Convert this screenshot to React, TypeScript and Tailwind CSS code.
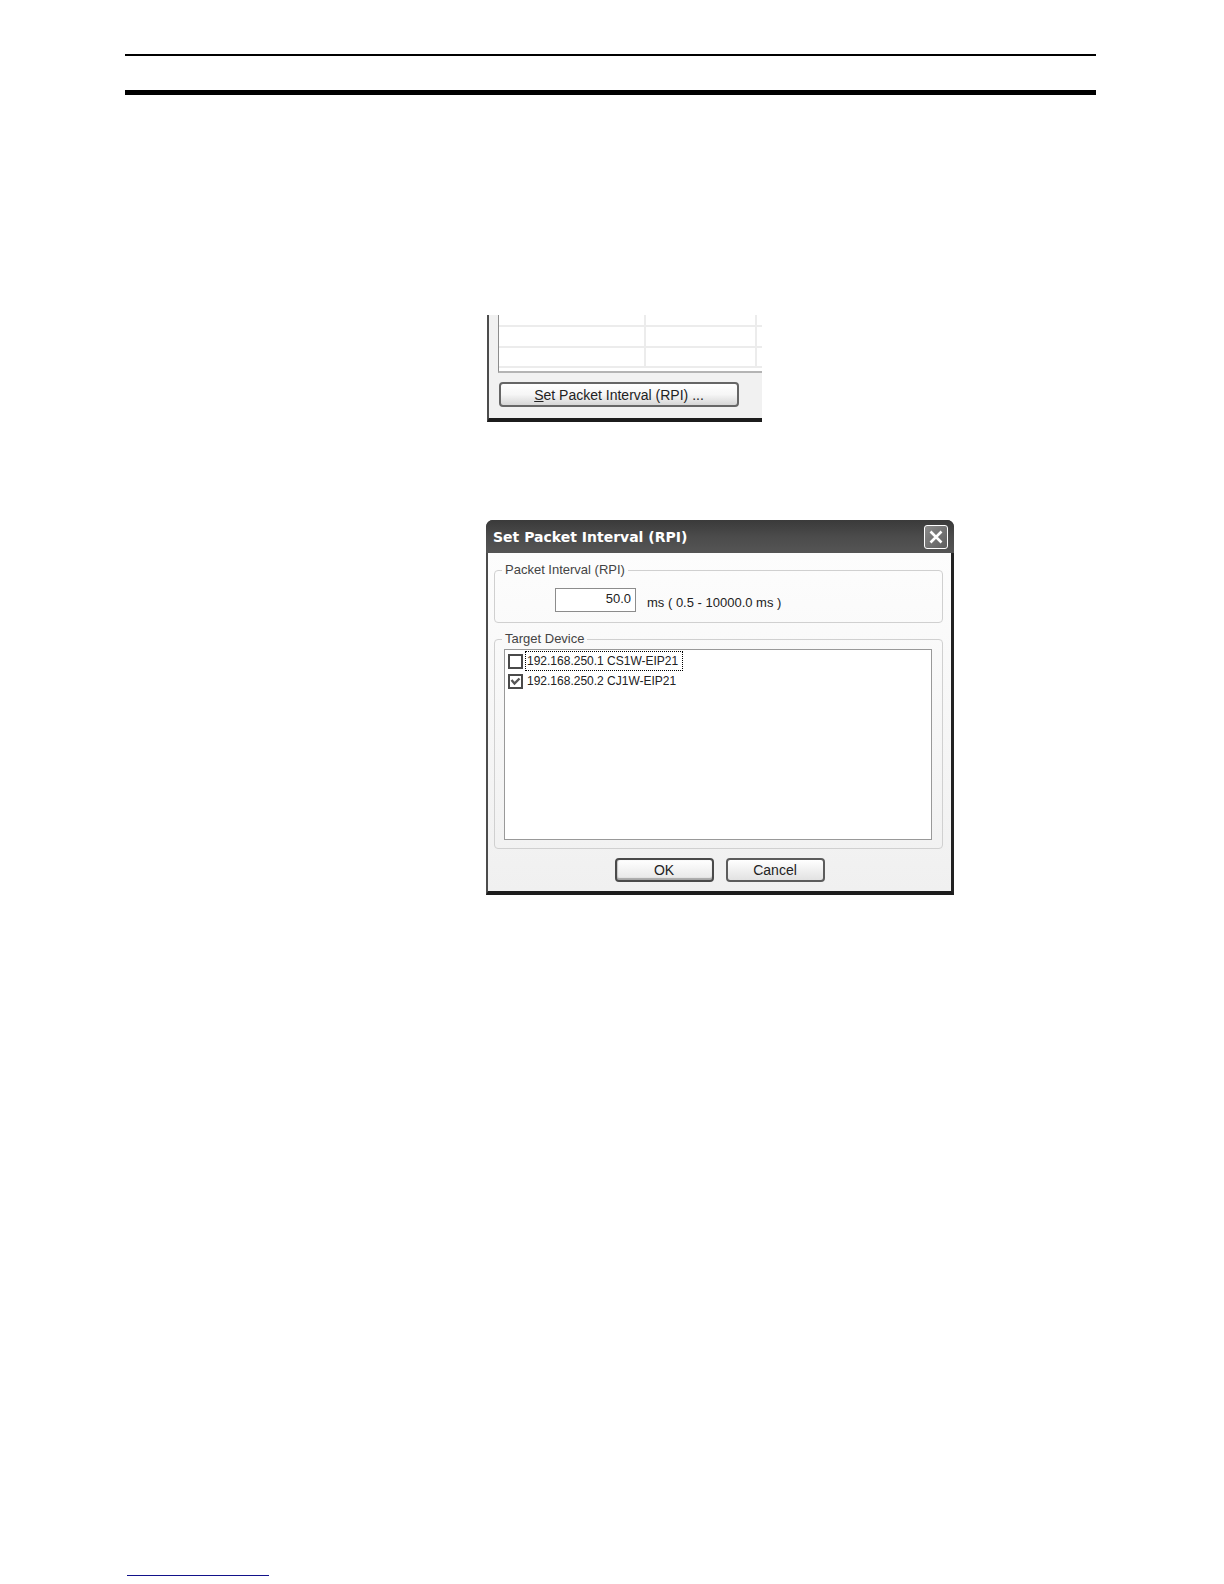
import React, { useState } from 'react';

type Device = {
  id: string;
  label: string;
  checked: boolean;
};

const initialDevices: Device[] = [
  { id: 'cs1w', label: '192.168.250.1 CS1W-EIP21', checked: false },
  { id: 'cj1w', label: '192.168.250.2 CJ1W-EIP21', checked: true },
];

// Two rules that run across the top of every manual page
const PageHeader = () => (
  <header className="flex flex-col gap-[34px] pt-[54px]">
    <div className="h-[2px] bg-black" />
    <div className="h-[5px] bg-black" />
  </header>
);

// Lower left corner of the connection window
const ConnectionTableCorner = () => (
  <section className="ml-px w-[275px] border-b-4 border-l-2 border-b-[#1c1c1c] border-l-[#4c4c4c] bg-[#f1f1f1]">
    <div className="pl-[9px]">
      <div className="border-b-2 border-l border-b-[#b4b4b4] border-l-[#8c8c8c] bg-white pb-[3px]">
        <table className="w-full table-fixed border-separate border-spacing-0">
          <colgroup>
            <col className="w-[147px]" />
            <col className="w-[111px]" />
            <col />
          </colgroup>
          <tbody>
            {['h-3', 'h-[21px]', 'h-5'].map((height, index) => (
              <tr key={index} className={height}>
                <td className="border-r-2 border-b-2 border-[#ececec] p-0" />
                <td className="border-r-2 border-b-2 border-[#ececec] p-0" />
                <td className="border-b-2 border-[#ececec] p-0" />
              </tr>
            ))}
          </tbody>
        </table>
      </div>
    </div>
    <div className="flex pt-[9px] pb-[11px] pl-[10px]">
      <button
        type="button"
        className="h-[25px] w-[240px] rounded-[4px] border-2 border-[#666] bg-linear-to-b from-white via-[#f6f6f6] to-[#d6d6d6] text-sm leading-4 text-[#222]"
      >
        <span className="underline">S</span>et Packet Interval (RPI) ...
      </button>
    </div>
  </section>
);

const CloseButton = () => (
  <button
    type="button"
    aria-label="Close"
    className="flex h-6 w-6 items-center justify-center rounded-[3px] border border-white bg-linear-to-br from-[#8c8c8c] to-[#5e5e5e]"
  >
    <svg width="14" height="14" viewBox="0 0 14 14" fill="none">
      <path d="M1.5 1.5L12.5 12.5M12.5 1.5L1.5 12.5" stroke="white" strokeWidth="2.6" />
    </svg>
  </button>
);

const DeviceRow = ({
  device,
  focused,
  onToggle,
}: {
  device: Device;
  focused: boolean;
  onToggle: () => void;
}) => (
  <div className="flex h-5 items-center gap-[2px]">
    <span className="relative flex h-[15px] w-[15px]">
      <input
        id={device.id}
        type="checkbox"
        checked={device.checked}
        onChange={onToggle}
        className="h-[15px] w-[15px] appearance-none border-2 border-[#4a4a4a] bg-white"
      />
      {device.checked && (
        <svg
          viewBox="0 0 15 15"
          fill="none"
          className="pointer-events-none absolute inset-0 h-[15px] w-[15px]"
        >
          <path d="M3.5 6L6.5 9.5L11.5 4.5" stroke="#555" strokeWidth="2.4" />
        </svg>
      )}
    </span>
    <label
      htmlFor={device.id}
      className={`flex h-5 items-center border border-dotted pr-1 pl-px text-xs leading-4 ${
        focused ? 'border-black' : 'border-transparent'
      }`}
    >
      {device.label}
    </label>
  </div>
);

const PacketIntervalDialog = () => {
  const [interval, setInterval] = useState('50.0');
  const [devices, setDevices] = useState(initialDevices);

  const toggleDevice = (id: string) => {
    setDevices(devices.map((d) => (d.id === id ? { ...d, checked: !d.checked } : d)));
  };

  return (
    <section
      role="dialog"
      aria-labelledby="dialog-title"
      className="w-[468px] overflow-hidden rounded-t-[7px] bg-[#222]"
    >
      <div className="flex h-[33px] items-center justify-between bg-linear-to-b from-[#3a3a3a] via-[#4b4b4b] to-[#555] pt-px pr-[6px] pl-[7px]">
        <h2 id="dialog-title" className="font-['DejaVu_Sans'] text-sm leading-4 font-bold text-white">
          Set Packet Interval (RPI)
        </h2>
        <CloseButton />
      </div>

      <div className="border-r-[3px] border-b-4 border-l-2 border-r-[#222] border-b-[#1c1c1c] border-l-[#4c4c4c] bg-linear-to-b from-[#fdfdfd] to-[#f0f0f0] pt-[9px] pr-2 pb-[9px] pl-[6px]">
        <fieldset className="rounded-[4px] border border-[#d0d0d0] pr-2 pb-[10px] pl-[60px]">
          <legend className="-ml-[53px] px-[3px] text-[13px] leading-4 text-[#444]">
            Packet Interval (RPI)
          </legend>
          <div className="flex items-center gap-[11px] pt-[10px]">
            <input
              type="text"
              aria-label="Packet interval in milliseconds"
              value={interval}
              onChange={(e) => setInterval(e.target.value)}
              className="h-6 w-[81px] border border-[#8c8c8c] bg-white pr-1 pb-1 text-right text-[13px] leading-4"
            />
            <span className="pt-[6px] text-[13px] leading-4">ms ( 0.5 - 10000.0 ms )</span>
          </div>
        </fieldset>

        <fieldset className="mt-2 rounded-[4px] border border-[#d0d0d0] pr-[10px] pb-2 pl-[9px]">
          <legend className="-ml-[2px] px-[3px] text-[13px] leading-4 text-[#444]">Target Device</legend>
          <div className="mt-[2px] h-[191px] border border-[#999] bg-white pt-px pl-[3px]">
            {devices.map((device, index) => (
              <DeviceRow
                key={device.id}
                device={device}
                focused={index === 0}
                onToggle={() => toggleDevice(device.id)}
              />
            ))}
          </div>
        </fieldset>

        <div className="flex justify-center gap-3 pt-[9px] pl-[2px]">
          <button
            type="button"
            className="h-6 w-[99px] rounded-[4px] border-2 border-[#4a4a4a] bg-linear-to-b from-white to-[#e6e6e6] text-sm leading-4 text-[#222] shadow-[inset_0_-2px_1px_#a8a8a8,inset_1px_0_1px_#c8c8c8]"
          >
            OK
          </button>
          <button
            type="button"
            className="h-6 w-[99px] rounded-[4px] border-2 border-[#5c5c5c] bg-linear-to-b from-white to-[#e2e2e2] text-sm leading-4 text-[#222]"
          >
            Cancel
          </button>
        </div>
      </div>
    </section>
  );
};

export default function App() {
  return (
    <div className="flex min-h-screen flex-col bg-white pr-32 pb-2 pl-[125px] font-['Liberation_Sans',sans-serif] text-[#222]">
      <PageHeader />
      <main className="flex flex-col gap-[98px] pt-[220px] pl-[361px]">
        <ConnectionTableCorner />
        <PacketIntervalDialog />
      </main>
      <footer className="mt-auto pl-[2px]">
        <div className="h-px w-[142px] bg-[#12128a]" />
      </footer>
    </div>
  );
}
